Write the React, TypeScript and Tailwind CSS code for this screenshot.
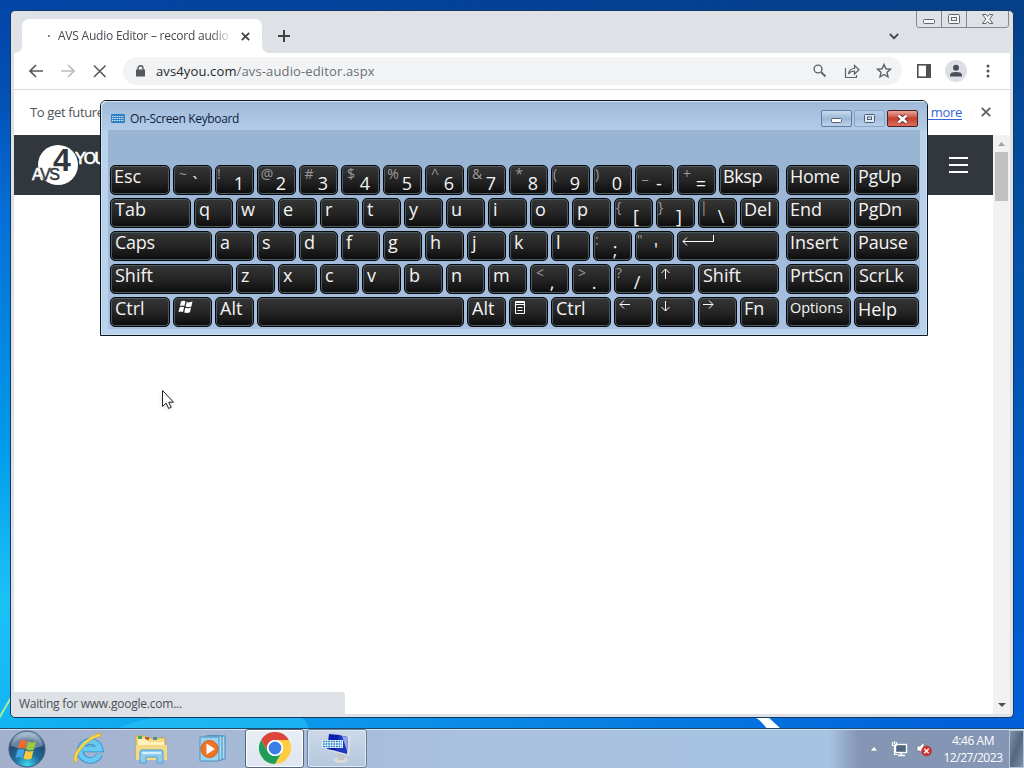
import { ReactNode } from "react";
import clsx from "clsx";

type KeyDef = {
  label?: string;
  shift?: string;
  icon?: ReactNode;
  width?: string;
  text?: string;
};

const stroke = { fill: "none", stroke: "#fff", strokeWidth: 1 };

const ArrowUp = (
  <svg width="12" height="12" className="mt-[3px]" {...stroke}>
    <path d="M5.5 11V1M1.5 5l4-4 4 4" />
  </svg>
);
const ArrowDown = (
  <svg width="12" height="12" className="mt-[3px]" {...stroke}>
    <path d="M5.5 0v10M1.5 6l4 4 4-4" />
  </svg>
);
const ArrowLeft = (
  <svg width="12" height="12" className="mt-px ml-px" {...stroke}>
    <path d="M11 5.500H1M5 1.500l-4 4 4 4" />
  </svg>
);
const ArrowRight = (
  <svg width="12" height="12" className="mt-px ml-px" {...stroke}>
    <path d="M0 5.500h10M6 1.500l4 4-4 4" />
  </svg>
);
const EnterArrow = (
  <svg width="34" height="12" className="mt-[3px] ml-px" {...stroke}>
    <path d="M31.500 0v6.500H1M5 2.500l-4 4 4 4" />
  </svg>
);
const WinFlag = (
  <svg width="16" height="15" className="mt-[2px] ml-px" fill="#fff">
    <path d="M3 1.500Q5.500 .3 7.500 1.300L6.400 6Q4.500 5 2 6zM8.700 2Q11 3 14.500 1.600L13.400 6.400Q10.500 7.500 7.600 6.400zM1.700 7.200Q4 6.200 6.100 7.200L5 12Q3 11 .5 12zM7.300 7.700Q10 8.700 13 7.600L12 12.200Q9 13.500 6.200 12.500z" />
  </svg>
);
const MenuIcon = (
  <svg width="12" height="14" className="mt-[3px] ml-[2px]" {...stroke}>
    <path d="M.5 .5h9v12h-9zM.5 3.500h9M2.500 6.500h5M2.500 9.500h5" />
    <path d="M0 1.500h10" />
  </svg>
);

const letters = (s: string): KeyDef[] => s.split("").map((label) => ({ label }));

const pair = (shift: string, label: string, text?: string): KeyDef => ({
  shift,
  label,
  text,
});

// shift characters that sit flush with the left edge of the key
const narrow = '!(){}|:"?';

const rows: KeyDef[][] = [
  [
    { label: "Esc", width: "w-[60px]" },
    pair("~", "`", "-ml-[2px]"),
    pair("!", "1"),
    pair("@", "2"),
    pair("#", "3"),
    pair("$", "4"),
    pair("%", "5"),
    pair("^", "6"),
    pair("&", "7"),
    pair("*", "8"),
    pair("(", "9"),
    pair(")", "0"),
    pair("_", "-"),
    pair("+", "="),
    { label: "Bksp", width: "w-[60px]", text: "tracking-[-0.4px]" },
  ],
  [
    { label: "Tab", width: "w-[81px]", text: "ml-px" },
    ...letters("qwertyuiop"),
    pair("{", "[", "-ml-[2px]"),
    pair("}", "]", "-ml-px"),
    pair("|", "\\", "-ml-px"),
    { label: "Del" },
  ],
  [
    { label: "Caps", width: "w-[102px]", text: "ml-px tracking-[-0.3px]" },
    ...letters("asdfghjkl"),
    pair(":", ";", "-ml-[2px]"),
    pair('"', "'", "-ml-[3px]"),
    { icon: EnterArrow, width: "w-[102px]" },
  ],
  [
    { label: "Shift", width: "w-[123px]", text: "ml-px" },
    ...letters("zxcvbnm"),
    pair("<", ",", "-ml-[2px]"),
    pair(">", ".", "-ml-[2px]"),
    pair("?", "/", "-ml-px"),
    { icon: ArrowUp },
    { label: "Shift", width: "w-[81px]", text: "ml-px" },
  ],
  [
    { label: "Ctrl", width: "w-[60px]", text: "ml-px" },
    { icon: WinFlag },
    { label: "Alt", text: "ml-px" },
    { width: "w-[207px]" },
    { label: "Alt", text: "ml-px" },
    { icon: MenuIcon },
    { label: "Ctrl", width: "w-[60px]", text: "ml-px" },
    { icon: ArrowLeft },
    { icon: ArrowDown },
    { icon: ArrowRight },
    { label: "Fn" },
  ],
];

const sideKeys: KeyDef[] = [
  { label: "Home", text: "tracking-[-0.35px]" },
  { label: "PgUp", text: "tracking-[-0.4px]" },
  { label: "End" },
  { label: "PgDn", text: "tracking-[-0.2px]" },
  { label: "Insert" },
  { label: "Pause", text: "tracking-[-0.2px]" },
  { label: "PrtScn", text: "tracking-[-0.1px]" },
  { label: "ScrLk", text: "ml-px" },
  { label: "Options", text: "text-[14.5px] tracking-[-0.1px]" },
  { label: "Help", text: "mt-px" },
];

const Key = ({ label, shift, icon, width = "w-[39px]", text }: KeyDef) => (
  <div
    className={clsx(
      width,
      "h-[30px] shrink-0 rounded-[5px] border border-[#05080a] bg-linear-to-b from-[#363636] via-[#232323] via-55% to-[#0c0c0c] shadow-[inset_0_0_0_1px_#4a5c62]",
      "flex items-start overflow-hidden pl-[3px] text-[18px] leading-[20px] text-[#f4f4f4]"
    )}
  >
    {shift ? (
      <>
        <span
          className={clsx(
            "-ml-[2px] w-[16px] text-[14px] leading-[15px] text-[#9a9a9a]",
            !narrow.includes(shift) && "text-center"
          )}
        >
          {shift}
        </span>
        <span className={clsx("w-[12px] pt-[7px] text-center", text)}>
          {label}
        </span>
      </>
    ) : (
      <>
        {label && (
          <span
            className={clsx(
              "whitespace-nowrap",
              label.length === 1 && "ml-px",
              text
            )}
          >
            {label}
          </span>
        )}
        {icon}
      </>
    )}
  </div>
);

const CaptionButton = ({ kind }: { kind: "min" | "max" | "close" }) => (
  <div
    className={clsx(
      "flex h-[17px] w-[31px] items-center justify-center rounded-[2px] border",
      kind === "close"
        ? "border-[#4d1d28] bg-linear-to-b from-[#e7a69d] via-[#c6402c] via-50% to-[#d8705c]"
        : kind === "min"
          ? "border-[#5f7ba3] bg-linear-to-b from-[#c9dcf0] via-[#9db7d5] via-50% to-[#bdd3eb]"
          : "border-[#8aa7cb] bg-linear-to-b from-[#b5cde8] via-[#a4bfdd] via-50% to-[#b7cfe9]"
    )}
  >
    {kind === "min" && (
      <svg width="12" height="6" className="mt-1">
        <rect x=".5" y=".5" width="10" height="4" rx="1" fill="#fff" stroke="#4c5d76" />
      </svg>
    )}
    {kind === "max" && (
      <svg width="11" height="9" fill="#dfeaf5" stroke="#4c5d76">
        <rect x=".5" y=".5" width="10" height="8" rx="1" />
        <rect x="3.500" y="3" width="4" height="2.500" />
      </svg>
    )}
    {kind === "close" && (
      <svg width="13" height="10">
        <path d="M2.500 1.500l8 7M10.500 1.500l-8 7" stroke="#5b2b36" strokeWidth="4.400" />
        <path d="M2.500 1.500l8 7M10.500 1.500l-8 7" stroke="#fff" strokeWidth="2.600" />
      </svg>
    )}
  </div>
);

const Keyboard = () => (
  <div className="absolute top-[100px] left-[100px] h-[236px] w-[828px] rounded-t-[6px] border border-[#10161d] bg-linear-to-b from-[#a4bedb] to-[#b9d3ec] to-15% shadow-[inset_0_0_0_1px_#cbe2f4]">
    <div className="flex h-[29px] items-center rounded-t-[5px] bg-linear-to-b from-[#9fb9d8] to-[#b2cce8] pt-[6px] pr-[9px] pl-[10px] shadow-[inset_1px_1px_0_#d5e5f4]">
      <svg width="14" height="9" className="mr-[5px]">
        <rect width="14" height="9" rx="1" fill="#2f7fc2" />
        <path
          d="M1 2.500h12M1 4.500h12M1 6.500h12"
          stroke="#d5ebfa"
          strokeDasharray="1.500 .8"
        />
      </svg>
      <span className="flex-1 pt-px text-[12px] tracking-[-0.35px] text-[#101f3c]">
        On-Screen Keyboard
      </span>
      <div className="flex gap-[2px]">
        <CaptionButton kind="min" />
        <CaptionButton kind="max" />
        <CaptionButton kind="close" />
      </div>
    </div>
    <div className="mx-[7px] flex h-[199px] gap-[7px] bg-linear-to-b from-[#9ab4d3] from-20% to-[#aac0e2] pt-[35px] pl-[2px]">
      <div className="flex flex-col gap-[3px]">
        {rows.map((row, i) => (
          <div key={i} className="flex gap-[3px]">
            {row.map((k, j) => (
              <Key key={j} {...k} />
            ))}
          </div>
        ))}
      </div>
      <div className="grid grid-cols-[65px_65px] content-start gap-[3px]">
        {sideKeys.map((k) => (
          <Key key={k.label} {...k} width="w-[65px]" />
        ))}
      </div>
    </div>
  </div>
);

const Logo = () => (
  <svg
    width="84"
    height="52"
    className="ml-[15px] overflow-hidden"
    fontFamily="Liberation Sans"
  >
    <circle cx="29" cy="26" r="20" fill="#fff" />
    <text x="24" y="32" fontSize="32" fontWeight="700" fill="#32373d">4</text>
    <text x="3" y="41" fontSize="16" fill="#fff" letterSpacing="-1.500" stroke="#fff" strokeWidth=".5">
      A<tspan fill="#32373d" stroke="#32373d">VS</tspan>
    </text>
    <text x="46" y="25" fontSize="16" fill="#fff" letterSpacing="-1.800" stroke="#fff" strokeWidth=".7">YOU</text>
  </svg>
);

const BrowserWindow = () => (
  <div className="absolute top-[10px] left-[10px] flex h-[708px] w-[1004px] flex-col rounded-[5px] border border-[#123a63] bg-[#dee1e6] px-[3px] pb-[3px]">
    {/* Tab strip */}
    <div className="flex h-[42px] shrink-0 items-start">
      <div className="relative mt-[8px] ml-[8px] flex h-[34px] w-[240px] items-center rounded-t-[7px] bg-white">
        <span className="ml-[26px] size-[2px] rounded-full bg-[#5f6368]" />
        <span className="ml-[8px] w-[174px] overflow-hidden mask-r-from-88% text-[12px] tracking-[-0.22px] whitespace-nowrap text-[#45494d]">
          AVS Audio Editor – record audio
        </span>
        <svg width="9" height="9" className="ml-[9px]" stroke="#3c4043" strokeWidth="1.700">
          <path d="M.8 .8l7.400 7.400M8.200 .8l-7.400 7.400" />
        </svg>
        <svg width="256" height="8" className="absolute bottom-0 -left-[8px]" fill="#fff">
          <path d="M0 8Q8 8 8 0V8zM256 8Q248 8 248 0V8z" />
        </svg>
      </div>
      <svg width="12" height="12" className="mt-[19px] ml-[16px]" stroke="#3c4043" strokeWidth="2">
        <path d="M6 0v12M0 6h12" />
      </svg>
      <svg width="10" height="7" className="mt-[22px] ml-[599px]" fill="none" stroke="#45494d" strokeWidth="1.800">
        <path d="M.8 1l4.200 4.200L9.200 1" />
      </svg>
      <svg width="94" height="17" className="ml-[17px]" fill="none" stroke="#85898f">
        <path d="M.5 0v14q0 2.500 2.500 2.500h87q2.500 0 2.500-2.500V0M25.500 0v16.500M50.500 0v16.500" />
        <g stroke="#62666c" fill="#f4f5f7">
          <rect x="7.500" y="8.500" width="11" height="4" rx="1" />
          <rect x="32.500" y="3.500" width="11" height="9" rx="1" />
          <rect x="35.500" y="6.500" width="5" height="3" />
          <path d="M66.500 3.500h3.500l1.700 2 1.700-2h3.500l-3.300 4.500 3.300 4.500h-3.500l-1.700-2-1.700 2h-3.500l3.300-4.500z" />
        </g>
      </svg>
    </div>

    {/* Toolbar */}
    <div className="flex h-[37px] shrink-0 items-center border-b border-[#d9dbde] bg-white">
      <svg width="86" height="16" className="ml-[14px]" fill="none" strokeWidth="1.700">
        <path d="M15 8H2M8 2L2 8l6 6" stroke="#55595e" />
        <path d="M33 8h13M40 2l6 6-6 6" stroke="#b9bcc0" />
        <path d="M66 2.500l11.500 11.500M77.500 2.500L66 14" stroke="#55595e" strokeWidth="1.600" />
      </svg>
      <div className="ml-[9px] flex h-[28px] w-[779px] items-center rounded-full bg-[#f1f3f4] pl-[13px]">
        <svg width="9" height="12" fill="#55595e">
          <path d="M0 4.500h9v7H0z" />
          <path d="M2 5V3.300a2.500 2.500 0 015 0V5" fill="none" stroke="#55595e" strokeWidth="1.400" />
        </svg>
        <span className="ml-[11px] flex-1 pt-[2px] text-[13px] tracking-[0.13px] text-[#6b7075]">
          <span className="text-[#25282c]">avs4you.com</span>/avs-audio-editor.aspx
        </span>
        <svg width="92" height="18" className="mr-[9px]" fill="none" stroke="#5f6368" strokeWidth="1.400">
          <circle cx="17" cy="7" r="3.900" />
          <path d="M20 10l4.500 4.500" strokeWidth="1.800" />
          <path d="M44.500 6v9.500h11V13" strokeWidth="1.200" />
          <path d="M47.500 12q.5-5.500 6-5.500V3.500l4.500 4.200-4.500 4.300V9q-4 0-6 3z" strokeWidth="1.200" />
          <path d="M83 2.500l1.900 4.300 4.600.4-3.500 3.100 1 4.600-4-2.400-4 2.400 1-4.600-3.500-3.100 4.600-.4z" />
        </svg>
      </div>
      <svg width="14" height="14" className="ml-[15px]">
        <rect x=".8" y=".8" width="12.400" height="12.400" fill="none" stroke="#4d5156" strokeWidth="1.600" />
        <path d="M9 1h4v12H9z" fill="#4d5156" />
      </svg>
      <svg width="22" height="22" className="ml-[14px]" fill="#4a4e59">
        <circle cx="11" cy="11" r="11" fill="#dcdfe5" />
        <circle cx="11" cy="7.800" r="3" />
        <path d="M5 16.500v-1.500q0-3 6-3t6 3v1.500z" />
      </svg>
      <svg width="4" height="14" className="ml-[19px]" fill="#4d5156">
        <circle cx="2" cy="2" r="1.500" />
        <circle cx="2" cy="7" r="1.500" />
        <circle cx="2" cy="12" r="1.500" />
      </svg>
    </div>

    {/* Info bar */}
    <div className="flex h-[45px] shrink-0 items-center bg-white pr-[19px] pl-[16px] text-[13px] text-[#4f5358]">
      <span className="flex-1 tracking-[-0.35px]">To get future</span>
      <span className="tracking-[-0.3px] text-[#3367d6] underline underline-offset-2">Learn more</span>
      <svg width="10" height="10" className="-mt-px ml-[19px]" stroke="#5f6368" strokeWidth="1.900">
        <path d="M.8 .8l8.400 8.400M9.200 .8L.8 9.200" />
      </svg>
    </div>

    {/* Page */}
    <div className="relative flex flex-1 bg-white">
      <div className="flex-1">
        <div className="flex h-[60px] items-center justify-between bg-[#32373d] pr-[25px]">
          <Logo />
          <div className="flex flex-col gap-[5px]">
            <span className="h-[2px] w-[19px] bg-white" />
            <span className="h-[2px] w-[19px] bg-white" />
            <span className="h-[2px] w-[19px] bg-white" />
          </div>
        </div>
      </div>
      <div className="flex w-[17px] flex-col items-center bg-[#f1f1f1]">
        <svg width="7" height="4" className="mt-[7px]" fill="#a0a0a0">
          <path d="M0 4l3.500-4L7 4z" />
        </svg>
        <div className="mt-[6px] h-[49px] w-[13px] bg-[#c1c1c1]" />
        <svg width="8" height="4" className="mt-auto mb-[7px]" fill="#505050">
          <path d="M0 0h8L4 4z" />
        </svg>
      </div>
      <div className="absolute bottom-0 left-0 h-[22px] w-[331px] rounded-tr-[3px] bg-[#dee1e6] pl-[5px] text-[12px] leading-[24px] tracking-[-0.22px] text-[#4c5055]">
        Waiting for www.google.com...
      </div>
    </div>
  </div>
);

const StartOrb = () => (
  <svg width="38" height="38" viewBox="0 0 38 38">
    <defs>
      <radialGradient id="orb" cx=".5" cy=".95" r=".9">
        <stop offset="0" stopColor="#3fd8ee" />
        <stop offset=".4" stopColor="#1c6f9e" />
        <stop offset=".75" stopColor="#244a70" />
        <stop offset="1" stopColor="#9db7cf" />
      </radialGradient>
    </defs>
    <circle cx="19" cy="19" r="18" fill="url(#orb)" stroke="#3d5879" />
    <path d="M3 16a16.500 16.500 0 0132 0q-16 5-32 0z" fill="#fff" opacity=".3" />
    <path d="M12 11q3-2 7 0l-2 8q-3-2-7 0z" fill="#ee6a2c" />
    <path d="M20 11.500q4 2 8 0l-2 8q-4 2-8 0z" fill="#9bc83d" />
    <path d="M9.500 20q4-2 7 0l-2 8q-3-2-7 0z" fill="#45a6e4" />
    <path d="M17.500 20.500q4 2 8 0l-2 8q-4 2-8 0z" fill="#fbc938" />
  </svg>
);

const IeIcon = () => (
  <svg width="34" height="34" viewBox="0 0 34 34" fill="none">
    <path d="M26.500 22.500A10 9.500 0 1127 17H10" stroke="#2c91ce" strokeWidth="6.600" />
    <path d="M26.500 22.500A10 9.500 0 1127 17H10" stroke="#69c9f2" strokeWidth="4.800" />
    <path d="M3 30C-1 24 12 6 28 2.500q-3 0-5 1" stroke="#d9aa20" strokeWidth="3.200" />
    <path d="M3 29.500C0 23 12 6 27 3" stroke="#f7dd57" strokeWidth="2" />
  </svg>
);

const ExplorerIcon = () => (
  <svg width="34" height="32" viewBox="0 0 34 32">
    <path d="M2 3h9l2 2h18v21H2z" fill="#f4dc83" stroke="#c9a845" />
    <path d="M4 3h4v3H4z" fill="#4da557" />
    <path d="M11 4h4v3h-4z" fill="#c95a35" />
    <path d="M19 4h4v3h-4z" fill="#4c8c9a" />
    <path d="M4 6h8l2 3h16v4H4z" fill="#fff3bb" />
    <path d="M2 12h31v15H2z" fill="#f2d988" />
    <path d="M6 30V19q0-2 2-2h19q2 0 2 2v11h-6v-6H12v6z" fill="#8ccdf0" stroke="#4b9fd2" />
    <path d="M8 19h19v2H8z" fill="#d3effc" />
  </svg>
);

const MediaIcon = () => (
  <svg width="30" height="28" viewBox="0 0 30 28">
    <path d="M9 1h17v23H9z" fill="#a9dcf5" stroke="#4389b5" />
    <path d="M6 1h17v24H6z" fill="#a9dcf5" stroke="#4389b5" />
    <path d="M1 2h19v24H1z" fill="#9dd2ef" stroke="#4c93bf" />
    <circle cx="10.500" cy="14" r="8.500" fill="#ee7424" stroke="#d35b12" />
    <path d="M7.500 8.500v11l8.500-5.500z" fill="#fff" />
  </svg>
);

const ChromeIcon = () => (
  <svg width="32" height="32" viewBox="0 0 32 32">
    <circle cx="16" cy="16" r="16" fill="#fff" />
    <path d="M2.140 8A16 16 0 0129.860 8H16a8 8 0 00-6.930 12z" fill="#db4437" />
    <path d="M29.860 8A16 16 0 0116 32l6.930-12A8 8 0 0016 8z" fill="#ffcd40" />
    <path d="M16 32A16 16 0 012.140 8l6.930 12A8 8 0 0022.930 20z" fill="#1f9d58" />
    <circle cx="16" cy="16" r="8" fill="#fff" />
    <circle cx="16" cy="16" r="6.400" fill="#3b7de9" />
  </svg>
);

const OskIcon = () => (
  <svg width="32" height="31" viewBox="0 0 32 31">
    <ellipse cx="20" cy="27" rx="7" ry="3" fill="#dcdcd6" />
    <path d="M16 21l8 1-1 5h-6z" fill="#c5c7c4" />
    <path d="M8 1l22 2-2 20L5 17z" fill="#d9dde4" />
    <path d="M8 1l11 1-3 16-10-2z" fill="#0b1fb0" />
    <path d="M18 2l9 2-1 17-11-3z" fill="#1c36c0" />
    <path d="M21 3l6 1-1 14z" fill="#91a5e8" />
    <rect x="1" y="7" width="21" height="8" fill="#eaf6fd" />
    <path d="M2 8.500h19M2 11h19M2 13.500h19" stroke="#1977be" strokeWidth="1.600" strokeDasharray="1.700 .9" />
  </svg>
);

const Taskbar = () => (
  <div className="absolute bottom-0 left-0 flex h-[40px] w-full items-center border-t border-[#1d4b70] bg-linear-to-r from-[#a3b0cb] via-[#a8c1df] via-45% to-[#a8c3e2] to-80% shadow-[inset_0_1px_0_#d2e3f1]">
    <div className="ml-[8px]"><StartOrb /></div>
    <div className="ml-[27px]"><IeIcon /></div>
    <div className="ml-[27px]"><ExplorerIcon /></div>
    <div className="ml-[31px]"><MediaIcon /></div>
    <div className="ml-[16px] flex h-full w-[59px] items-center justify-center rounded-[3px] border border-[#51677f] bg-linear-to-b from-[#e9eef5] to-[#dfe6f0] pb-px shadow-[inset_0_0_0_1px_#fff]">
      <ChromeIcon />
    </div>
    <div className="ml-[3px] flex h-full w-[60px] items-start justify-center rounded-[3px] border border-[#6a8099] bg-linear-to-b from-[#cbd8e8] to-[#b5c8df] pt-[3px] shadow-[inset_0_0_0_1px_#dce8f4]">
      <OskIcon />
    </div>
    <div className="ml-auto flex h-[38px] items-center bg-linear-to-r from-transparent to-[#8496b3] to-15% pl-[41px]">
      <svg width="8" height="5" fill="#fff" stroke="#53647c" strokeWidth=".5">
        <path d="M0 5l4-4.500L8 5z" />
      </svg>
      <svg width="17" height="16" className="ml-[13px]" stroke="#fff" fill="none">
        <rect x="4.500" y="3.500" width="11" height="8" fill="#53657e" strokeWidth="1.400" />
        <path d="M7 14.500h7M10 12v2" strokeWidth="1.500" />
        <path d="M1.500 1v3.500h4V1M3.500 0v3M3.500 5v8.500h3" strokeWidth="1.200" />
      </svg>
      <svg width="18" height="16" className="ml-[8px]">
        <path d="M1 5h3l4-4v13l-4-4H1z" fill="#fff" stroke="#5a6575" strokeWidth=".6" />
        <circle cx="10.500" cy="10" r="5" fill="#d4302b" stroke="#9d2b2b" strokeWidth=".5" />
        <path d="M8.300 7.800l4.400 4.400M12.700 7.800l-4.400 4.400" stroke="#fff" strokeWidth="1.400" />
      </svg>
      <div className="ml-[8px] w-[62px] text-center text-[12px] leading-[17px] tracking-[-0.45px] whitespace-nowrap text-white">
        <div>4:46 AM</div>
        <div>12/27/2023</div>
      </div>
      <div className="ml-[5px] h-full w-[15px] border border-[#b5c4d7] bg-linear-to-br from-[#8194ab] via-[#54677f] to-[#7d91aa]" />
    </div>
  </div>
);

export default function App() {
  return (
    <div className="relative h-[768px] w-[1024px] overflow-hidden bg-[linear-gradient(180deg,#0345a6_0,#0450b4_12%,#0470d8_28%,#029bea_58%,#1cc3f6_78%,#10b0f2_100%)] font-['Open_Sans','Noto_Sans',sans-serif]">
      <div className="absolute inset-y-0 right-0 w-full bg-[linear-gradient(180deg,#053f88_0,#034e9f_25%,#0259bf_60%,#005fdc_100%)] mask-l-from-5%" />
      <svg width="1024" height="768" className="absolute inset-0" fill="none">
        <path d="M753 716h14l14 13h-14q-6-9-14-13z" fill="#fff" />
        <path d="M-2 720l14-24" stroke="#a6ee9a" strokeWidth="2" />
        <path d="M118 728q18-8 42-11h140q8 4 8 11z" fill="#2cc8fa" opacity=".5" />
      </svg>
      <BrowserWindow />
      <Keyboard />
      <Taskbar />
      <svg width="16" height="23" className="absolute top-[389px] left-[161px] drop-shadow-sm">
        <path d="M1.500 1.500v16l3.600-3.400 2.600 5.400 2.500-1.200-2.500-5.100h4.800z" fill="#fff" stroke="#222" />
      </svg>
    </div>
  );
}
